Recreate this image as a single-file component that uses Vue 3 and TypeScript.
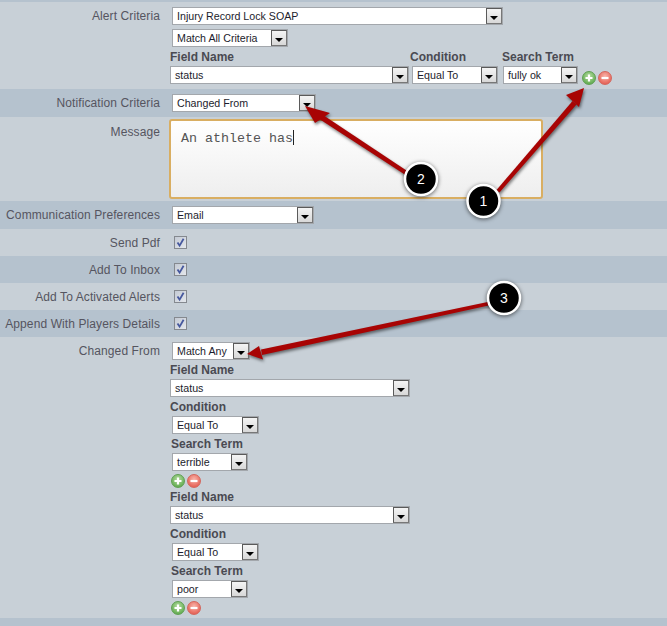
<script setup lang="ts">
interface Criterion {
  term: string
  termClass: string
}

const criteria: Criterion[] = [
  { term: 'terrible', termClass: 'w-76' },
  { term: 'poor', termClass: 'w-76' },
]

const checks: { label: string; tone: string }[] = [
  { label: 'Send Pdf', tone: 'light' },
  { label: 'Add To Inbox', tone: 'dark' },
  { label: 'Add To Activated Alerts', tone: 'light' },
  { label: 'Append With Players Details', tone: 'dark' },
]

const badges = [
  { n: 1, x: 483.5, y: 201 },
  { n: 2, x: 421, y: 179 },
  { n: 3, x: 504, y: 298 },
]
</script>

<template>
  <div class="page">
    <div class="topbar"></div>

    <div class="row light first">
      <div class="label">Alert Criteria</div>
      <div class="field">
        <div class="sel w-331 inset"><span>Injury Record Lock SOAP</span><i class="btn"></i></div>
        <div class="sel w-116 inset gap"><span>Match All Criteria</span><i class="btn"></i></div>
        <div class="cols">
          <div class="col c1">
            <div class="cap">Field Name</div>
            <div class="sel w-239"><span>status</span><i class="btn"></i></div>
          </div>
          <div class="col c2">
            <div class="cap">Condition</div>
            <div class="sel w-86 inset"><span>Equal To</span><i class="btn"></i></div>
          </div>
          <div class="col c3">
            <div class="cap">Search Term</div>
            <div class="sel w-75 inset1"><span>fully ok</span><i class="btn"></i></div>
          </div>
          <div class="icons side">
            <span class="ico add"><svg viewBox="0 0 14 14"><path d="M7 3.5v7M3.5 7h7" /></svg></span>
            <span class="ico del"><svg viewBox="0 0 14 14"><path d="M3.5 7h7" /></svg></span>
          </div>
        </div>
      </div>
    </div>

    <div class="row dark">
      <div class="label">Notification Criteria</div>
      <div class="field">
        <div class="sel w-144 inset"><span>Changed From</span><i class="btn"></i></div>
      </div>
    </div>

    <div class="row light message">
      <div class="label">Message</div>
      <div class="field">
        <div class="textarea">An athlete has<b class="caret"></b></div>
      </div>
    </div>

    <div class="row dark">
      <div class="label">Communication Preferences</div>
      <div class="field">
        <div class="sel w-142 inset"><span>Email</span><i class="btn"></i></div>
      </div>
    </div>

    <div v-for="c in checks" :key="c.label" class="row check" :class="c.tone">
      <div class="label">{{ c.label }}</div>
      <div class="field">
        <span class="box">
          <svg viewBox="0 0 11 11"><path d="M2.5 5.5 4.6 8.6 8.6 1.8" /></svg>
        </span>
      </div>
    </div>

    <div class="row light last">
      <div class="label">Changed From</div>
      <div class="field">
        <div class="sel w-78 inset"><span>Match Any</span><i class="btn"></i></div>
        <div v-for="c in criteria" :key="c.term" class="block">
          <div class="cap">Field Name</div>
          <div class="sel w-240"><span>status</span><i class="btn"></i></div>
          <div class="cap">Condition</div>
          <div class="sel w-87 inset"><span>Equal To</span><i class="btn"></i></div>
          <div class="cap shift">Search Term</div>
          <div class="sel inset" :class="c.termClass"><span>{{ c.term }}</span><i class="btn"></i></div>
          <div class="icons">
            <span class="ico add"><svg viewBox="0 0 14 14"><path d="M7 3.5v7M3.5 7h7" /></svg></span>
            <span class="ico del"><svg viewBox="0 0 14 14"><path d="M3.5 7h7" /></svg></span>
          </div>
        </div>
      </div>
    </div>

    <div class="row dark tail"></div>

    <svg class="overlay" viewBox="0 0 667 626" width="667" height="626">
      <g class="arrows">
        <path d="M496.5 190 572.5 101 576.5 104.5 499.5 192.5Z" />
        <path d="M584 88 566 95 579 107Z" />
        <path d="M408 171.5 320 113 317 117.5 405.5 175Z" />
        <path d="M305 106 315 123 330 113Z" />
        <path d="M490 301.5 261 349.5 262 355 491 305Z" />
        <path d="M247 354 263 359.5 259 346Z" />
      </g>
      <g v-for="b in badges" :key="b.n" class="badge">
        <circle :cx="b.x" :cy="b.y" r="16" />
        <text :x="b.x" :y="b.y + 5">{{ b.n }}</text>
      </g>
    </svg>
  </div>
</template>

<style>
html,
body {
  margin: 0;
  background: #c8d0d7;
}
</style>

<style scoped>
.page {
  position: relative;
  width: 667px;
  height: 626px;
  overflow: hidden;
  font-family: "Liberation Sans", Arial, sans-serif;
  font-size: 12px;
  color: #555560;
}
.topbar {
  height: 2px;
  background: #b5c2ce;
}
.row {
  display: flex;
  box-sizing: border-box;
  padding-top: 5px;
  height: 28px;
}
.row.light {
  background: #c8d0d7;
}
.row.dark {
  background: #b5c2ce;
}
.row.first {
  height: 87px;
}
.row.message {
  height: 84px;
  padding-top: 2px;
}
.row.message .label {
  padding-top: 4px;
}
.row.check {
  height: 27px;
  padding-top: 0;
  align-items: center;
}
.row.last {
  height: 281px;
}
.row.tail {
  height: 8px;
}
.label {
  width: 160px;
  flex: none;
  text-align: right;
  line-height: 18px;
  letter-spacing: 0.1px;
  white-space: nowrap;
}
.field {
  margin-left: 10px;
  flex: none;
}
.sel {
  display: flex;
  box-sizing: border-box;
  height: 18px;
  margin-bottom: 1px;
  border: 1px solid #a3a7ac;
  background: #fff;
  font-size: 10.67px;
  line-height: 16px;
  color: #1c1c2c;
}
.sel span {
  flex: 1;
  min-width: 0;
  padding-left: 4px;
  white-space: nowrap;
  overflow: hidden;
}
.inset {
  margin-left: 2px;
}
.inset1 {
  margin-left: 1px;
}
.gap {
  margin-top: 4px;
}
.w-331 { width: 331px; }
.w-116 { width: 116px; }
.w-239 { width: 239px; }
.w-240 { width: 240px; }
.w-86 { width: 86px; }
.w-87 { width: 87px; }
.w-75 { width: 75px; }
.w-76 { width: 76px; }
.w-144 { width: 144px; }
.w-142 { width: 142px; }
.w-78 { width: 78px; }
.btn {
  position: relative;
  flex: none;
  box-sizing: border-box;
  width: 16px;
  border: 1px solid #5a5a5a;
  border-right-color: #777;
  border-bottom-color: #777;
  background: linear-gradient(#f4f4f4, #d8d8d8);
}
.btn::after {
  content: "";
  position: absolute;
  left: 3px;
  top: 7px;
  border-style: solid;
  border-width: 4px 4px 0;
  border-color: #000 transparent transparent;
}
.cap {
  height: 18px;
  line-height: 18px;
  font-weight: 700;
  color: #4a4a52;
}
.cap.shift {
  padding-left: 1px;
}
.cols {
  display: flex;
  margin-top: 1px;
}
.cols .sel {
  margin-bottom: 0;
}
.c1 {
  width: 240px;
}
.c1 .sel {
  margin-left: 0;
}
.c2 {
  width: 92px;
}
.c3 {
  width: 80px;
}
.icons {
  display: flex;
  gap: 2px;
  margin: 3px 0 0 1px;
  height: 14px;
}
.icons.side {
  margin: 23px 0 0 0;
}
.ico {
  display: block;
  box-sizing: border-box;
  width: 14px;
  height: 14px;
  border-radius: 50%;
}
.ico svg {
  display: block;
  width: 14px;
  height: 14px;
  margin: -1px;
  fill: none;
  stroke: #fff;
  stroke-width: 2.2;
}
.add {
  border: 1px solid #5f9f52;
  background: radial-gradient(circle at 50% 35%, #b4dca0, #6cb25a 70%, #4f9a44);
}
.del {
  border: 1px solid #d4665c;
  background: radial-gradient(circle at 50% 35%, #f7b4aa, #e86a5e 70%, #d8524a);
}
.textarea {
  box-sizing: border-box;
  width: 374px;
  height: 80px;
  margin-left: -1px;
  padding: 9px 0 0 10px;
  border: 2px solid #d9ae62;
  border-radius: 3px;
  background: linear-gradient(#fff, #eee);
  font-family: "Liberation Mono", "Courier New", monospace;
  font-size: 13.33px;
  line-height: 16px;
  color: #555;
  white-space: pre;
}
.caret {
  display: inline-block;
  width: 1px;
  height: 15px;
  margin-bottom: -3px;
  background: #222;
}
.box {
  display: block;
  box-sizing: border-box;
  width: 13px;
  height: 13px;
  margin-left: 4px;
  border: 1px solid #85898f;
  background: linear-gradient(135deg, #c4cad4, #e4e7ec);
}
.box svg {
  display: block;
  width: 11px;
  height: 11px;
  fill: none;
  stroke: #46589e;
  stroke-width: 1.8;
}
.overlay {
  position: absolute;
  left: 0;
  top: 0;
  pointer-events: none;
}
.arrows {
  fill: #a80404;
  filter: drop-shadow(1px 2px 1.5px rgba(0, 0, 0, 0.5));
}
.badge circle {
  fill: #000;
  stroke: #fff;
  stroke-width: 2.5;
  filter: drop-shadow(0 1px 2px rgba(0, 0, 0, 0.6));
}
.badge text {
  fill: #fff;
  font-family: "Liberation Sans", Arial, sans-serif;
  font-size: 14px;
  text-anchor: middle;
}
</style>
